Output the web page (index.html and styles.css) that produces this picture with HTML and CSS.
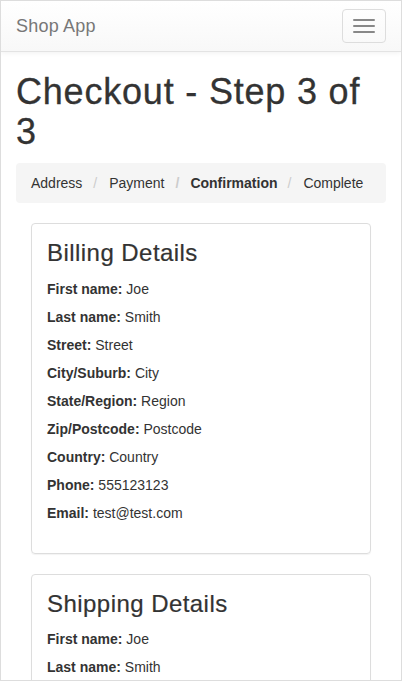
FILE: index.html
```html
<!DOCTYPE html>
<html lang="en">
<head>
<meta charset="utf-8">
<title>Checkout - Step 3 of 3</title>
<link rel="stylesheet" href="styles.css">
</head>
<body>
<div class="frame">
  <nav class="navbar">
    <a class="brand" href="#">Shop App</a>
    <button class="toggle" type="button" aria-label="Toggle navigation">
      <span class="bar"></span>
      <span class="bar"></span>
      <span class="bar"></span>
    </button>
  </nav>
  <main class="container">
    <h1 class="title">Checkout - Step 3 of 3</h1>
    <ol class="breadcrumb">
      <li>Address</li>
      <li>Payment</li>
      <li class="current">Confirmation</li>
      <li>Complete</li>
    </ol>
    <div class="cards">
      <section class="panel">
        <h3 class="panel-title">Billing Details</h3>
        <p class="field"><strong>First name:</strong> Joe</p>
        <p class="field"><strong>Last name:</strong> Smith</p>
        <p class="field"><strong>Street:</strong> Street</p>
        <p class="field"><strong>City/Suburb:</strong> City</p>
        <p class="field"><strong>State/Region:</strong> Region</p>
        <p class="field"><strong>Zip/Postcode:</strong> Postcode</p>
        <p class="field"><strong>Country:</strong> Country</p>
        <p class="field"><strong>Phone:</strong> 555123123</p>
        <p class="field"><strong>Email:</strong> test@test.com</p>
      </section>
      <section class="panel">
        <h3 class="panel-title">Shipping Details</h3>
        <p class="field"><strong>First name:</strong> Joe</p>
        <p class="field"><strong>Last name:</strong> Smith</p>
        <p class="field"><strong>Street:</strong> Street</p>
        <p class="field"><strong>City/Suburb:</strong> City</p>
        <p class="field"><strong>State/Region:</strong> Region</p>
        <p class="field"><strong>Zip/Postcode:</strong> Postcode</p>
        <p class="field"><strong>Country:</strong> Country</p>
      </section>
    </div>
  </main>
</div>
</body>
</html>
```

FILE: styles.css
```css
* { box-sizing: border-box; }
html, body { margin: 0; padding: 0; }
body {
  font-family: "Liberation Sans", Arial, Helvetica, sans-serif;
  font-size: 14px;
  line-height: 20px;
  color: #333;
  background: #fff;
}
.frame {
  width: 402px;
  height: 681px;
  border: 1px solid #ddd;
  overflow: hidden;
}
.navbar {
  height: 51px;
  display: flex;
  align-items: flex-start;
  justify-content: space-between;
  background: linear-gradient(to bottom, #fff 0%, #f8f8f8 100%);
  border-bottom: 1px solid #e3e3e3;
  box-shadow: 0 1px 5px rgba(0,0,0,0.06);
  padding: 0 15px;
}
.brand {
  font-size: 18px;
  line-height: 20px;
  padding: 15px 0;
  color: #777;
  text-decoration: none;
  letter-spacing: 0.2px;
}
.toggle {
  margin-top: 8px;
  width: 44px;
  height: 34px;
  border: 1px solid #ddd;
  border-radius: 4px;
  background: transparent;
  padding: 0;
  display: flex;
  flex-direction: column;
  align-items: center;
  justify-content: center;
  gap: 4px;
}
.bar {
  display: block;
  width: 22px;
  height: 2px;
  border-radius: 1px;
  background: #888;
}
.container {
  padding: 0 15px;
}
.title {
  font-size: 36px;
  line-height: 39.6px;
  font-weight: normal;
  letter-spacing: 0.8px;
  margin: 20px 0 12px;
  color: #333;
  -webkit-text-stroke: 0.3px #333;
}
.breadcrumb {
  list-style: none;
  margin: 0 0 20px;
  padding: 10px 15px;
  background: #f5f5f5;
  border-radius: 4px;
  display: flex;
}
.breadcrumb li + li::before {
  content: "/";
  color: #ccc;
  padding: 0 12px 0 11px;
}
.breadcrumb li:nth-child(3)::before { padding-right: 11px; }
.breadcrumb li:nth-child(4)::before { padding-left: 10px; }
.breadcrumb .current { font-weight: bold; }
.cards {
  padding: 0 15px;
}
.panel {
  border: 1px solid #ddd;
  border-radius: 4px;
  box-shadow: 0 1px 1px rgba(0,0,0,0.05);
  padding: 15px 15px 22px;
  margin-bottom: 20px;
}
.panel-title {
  font-size: 24px;
  line-height: 26.4px;
  font-weight: normal;
  letter-spacing: 0.45px;
  margin: 1px 0 12px;
  color: #333;
  -webkit-text-stroke: 0.2px #333;
}
.field {
  margin: 0 0 8px;
}
```
